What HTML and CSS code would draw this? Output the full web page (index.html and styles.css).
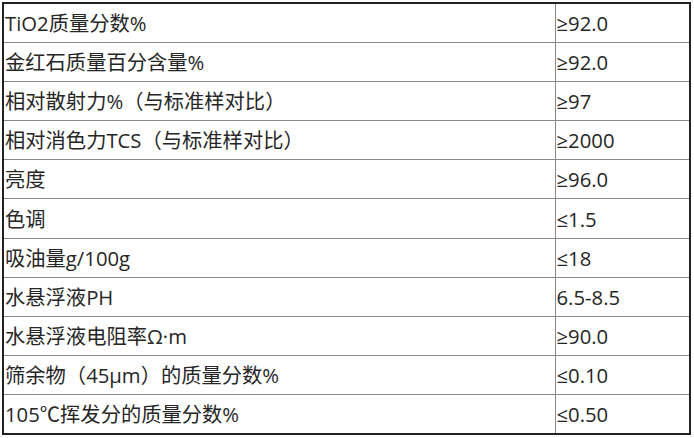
FILE: index.html
```html
<!DOCTYPE html>
<html lang="zh">
<head>
<meta charset="utf-8">
<link rel="stylesheet" href="styles.css">
</head>
<body>
<table class="spec">
<colgroup><col class="c-name"><col class="c-val"></colgroup>
<tbody>
<tr><td>TiO2质量分数%</td><td>≥92.0</td></tr>
<tr><td>金红石质量百分含量%</td><td>≥92.0</td></tr>
<tr><td>相对散射力%（与标准样对比）</td><td>≥97</td></tr>
<tr><td>相对消色力TCS（与标准样对比）</td><td>≥2000</td></tr>
<tr><td>亮度</td><td>≥96.0</td></tr>
<tr><td>色调</td><td>≤1.5</td></tr>
<tr><td>吸油量g/100g</td><td>≤18</td></tr>
<tr><td>水悬浮液PH</td><td>6.5-8.5</td></tr>
<tr><td>水悬浮液电阻率Ω·m</td><td>≥90.0</td></tr>
<tr><td>筛余物（45μm）的质量分数%</td><td>≤0.10</td></tr>
<tr><td>105℃挥发分的质量分数%</td><td>≤0.50</td></tr>
</tbody>
</table>
</body>
</html>
```

FILE: styles.css
```css
html, body {
  background: #fff;
}
body {
  margin: 2px 0 0 2px;
  font-family: "Open Sans", "Noto Sans CJK SC", sans-serif;
  color: #262626;
}
.spec {
  border-collapse: collapse;
  width: 689px;
  table-layout: fixed;
  border: 2px solid #222;
}
.c-name { width: 552px; }
.c-val { width: auto; }
.spec td {
  border: 1px solid #8a8a8a;
  height: 39.2px;
  padding: 0 0 0 1px;
  font-size: 20.3px;
  line-height: 24px;
  vertical-align: middle;
  white-space: nowrap;
  box-sizing: border-box;
}
.spec tr:first-child td { border-top: 2px solid #222; }
```
